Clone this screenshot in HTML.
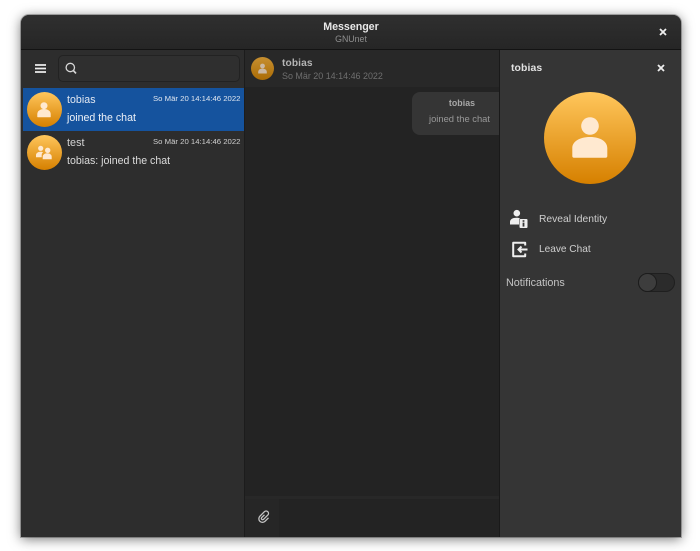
<!DOCTYPE html>
<html><head><meta charset="utf-8"><style>
html,body{margin:0;padding:0;width:700px;height:551px;background:#fff;overflow:hidden}
body{font-family:"Liberation Sans",sans-serif;position:relative}
.a{position:absolute}
.t{position:absolute;white-space:nowrap;line-height:14px}
.win{left:21px;top:15px;width:660px;height:522px;background:#2d2d2d;border-radius:8px 8px 0 0;box-shadow:0 2px 12px rgba(0,0,0,.55),0 0 0 1px rgba(0,0,0,.25)}
.av{position:absolute;border-radius:50%;background:linear-gradient(#ffc65c,#d68000)}
svg{position:absolute;overflow:visible}
</style></head><body>
<div class="a win"></div>
<div class="a" style="left:21px;top:15px;width:660px;height:34px;background:linear-gradient(#2f2f2f,#262626);border-radius:8px 8px 0 0"></div>
<div class="a" style="left:21px;top:49px;width:660px;height:1px;background:#131313"></div>
<div class="t" style="left:21px;width:660px;text-align:center;top:20px;color:#e8e8e8;font-size:10.7px;font-weight:bold;letter-spacing:-.05px">Messenger</div>
<div class="t" style="left:21px;width:660px;text-align:center;top:32px;color:#8f8f8f;font-size:8.8px">GNUnet</div>
<svg style="left:659px;top:28px" width="8" height="8"><path d="M1 1L7 7M7 1L1 7" stroke="#eee" stroke-width="1.8"/></svg>

<!-- sidebar -->
<div class="a" style="left:21px;top:50px;width:223px;height:487px;background:#2d2d2d"></div>
<div class="a" style="left:244px;top:50px;width:1px;height:487px;background:#1c1c1c"></div>
<svg style="left:35px;top:64px" width="11" height="9"><path d="M0 1H11M0 4.5H11M0 8H11" stroke="#ececec" stroke-width="1.8"/></svg>
<div class="a" style="left:58px;top:55px;width:180px;height:25px;background:#2f2f2f;border:1px solid #222;border-radius:5px"></div>
<svg style="left:65px;top:62px" width="12" height="12"><circle cx="5.3" cy="5.5" r="4.2" fill="none" stroke="#d6d6d6" stroke-width="1.3"/><path d="M8.4 8.6L11 11.4" stroke="#d6d6d6" stroke-width="1.7"/></svg>

<div class="a" style="left:23px;top:88px;width:221px;height:43px;background:#15539e"></div>
<div class="av" style="left:27px;top:92px;width:35px;height:35px"></div>
<svg style="left:27px;top:92px" width="35" height="35"><circle cx="17" cy="13.7" r="3.5" fill="#ffe9d0"/><path d="M10.3 24.6V22c0-2.8 2.8-5 6.7-5s6.7 2.2 6.7 5v2.6q0 .7-.7.7H11q-.7 0-.7-.7z" fill="#ffe9d0"/></svg>
<div class="t" style="left:67px;top:93px;color:#e2e8f2;font-size:10.6px;letter-spacing:.05px">tobias</div>
<div class="t" style="left:153px;top:92px;color:#dfe6f0;font-size:7.75px">So Mär 20 14:14:46 2022</div>
<div class="t" style="left:67px;top:111px;color:#eef2f8;font-size:10.6px">joined the chat</div>

<div class="av" style="left:27px;top:135px;width:35px;height:35px"></div>
<svg style="left:27px;top:135px" width="35" height="35"><circle cx="13.7" cy="13.3" r="2.6" fill="#ffe9d0"/><circle cx="20.7" cy="15.3" r="2.7" fill="#ffe9d0"/><path d="M9 22.3v-2.2c0-2 2-3.4 4.6-3.4 1 0 1.8.2 2.6.6-1 .6-1.5 1.6-1.5 2.7v2.3z" fill="#ffe9d0"/><path d="M15.7 24.3v-2.6c0-2 2.1-3.4 4.5-3.4s4.5 1.4 4.5 3.4v2.6z" fill="#ffe9d0"/></svg>
<div class="t" style="left:67px;top:136px;color:#d4d4d4;font-size:10.8px;letter-spacing:.05px">test</div>
<div class="t" style="left:153px;top:135px;color:#cfcfcf;font-size:7.75px">So Mär 20 14:14:46 2022</div>
<div class="t" style="left:67px;top:154px;color:#dcdcdc;font-size:10.6px">tobias: joined the chat</div>

<!-- content -->
<div class="a" style="left:245px;top:50px;width:255px;height:487px;background:#232323"></div>
<div class="a" style="left:245px;top:50px;width:255px;height:37px;background:#282828"></div>
<div class="av" style="left:251px;top:57px;width:23px;height:23px;background:linear-gradient(#c68f30,#ab6c05)"></div>
<svg style="left:251px;top:57px" width="23" height="23"><circle cx="11.5" cy="9" r="2.4" fill="#cbb9a4"/><path d="M7.2 16.5v-1.6c0-2 1.8-3.3 4.3-3.3s4.3 1.3 4.3 3.3v1.6z" fill="#cbb9a4"/></svg>
<div class="t" style="left:282px;top:57px;color:#b4b4b4;font-size:10.2px;font-weight:bold;letter-spacing:.1px">tobias</div>
<div class="t" style="left:282px;top:69px;color:#6f6f6f;font-size:8.95px">So Mär 20 14:14:46 2022</div>
<div class="a" style="left:412px;top:92px;width:88px;height:43px;background:#353535;border-radius:8px 0 0 8px"></div>
<div class="t" style="left:412px;width:100px;text-align:center;top:96px;color:#a8a8a8;font-size:8.8px;font-weight:bold;letter-spacing:.05px">tobias</div>
<div class="t" style="left:429px;top:112px;color:#999;font-size:9.4px">joined the chat</div>
<div class="a" style="left:245px;top:496px;width:255px;height:3px;background:#282828"></div>
<div class="a" style="left:245px;top:499px;width:34px;height:38px;background:#262626"></div>
<svg style="left:257px;top:510px" width="14" height="14" viewBox="0 0 14 14"><path d="M7.5 4.8L4.6 7.7a1.3 1.3 0 0 0 1.8 1.8L10.8 5.1a2.4 2.4 0 0 0-3.4-3.4L2.9 6.2a3.6 3.6 0 0 0 5.1 5.1L11.5 7.8" fill="none" stroke="#c4c4c4" stroke-width="1.3"/></svg>

<!-- panel -->
<div class="a" style="left:499px;top:50px;width:1px;height:487px;background:#191919"></div>
<div class="a" style="left:500px;top:50px;width:181px;height:487px;background:#353535"></div>
<div class="t" style="left:511px;top:62px;color:#e2e2e2;font-size:10.4px;font-weight:bold;letter-spacing:.1px">tobias</div>
<svg style="left:657px;top:64px" width="8" height="8"><path d="M1 1L7 7M7 1L1 7" stroke="#eee" stroke-width="1.8"/></svg>
<div class="av" style="left:544px;top:92px;width:92px;height:92px"></div>
<svg style="left:544px;top:92px" width="92" height="92"><circle cx="46" cy="34" r="8.8" fill="#ffe9d0"/><path d="M28.3 64V56C28.3 50 35 45 46 45S63.3 50 63.3 56V64q0 1.7-1.7 1.7H30q-1.7 0-1.7-1.7z" fill="#ffe9d0"/></svg>

<svg style="left:509px;top:209px" width="19" height="20"><circle cx="7.8" cy="4.2" r="3.3" fill="#eee"/><path d="M1 15.5v-2.5c0-2.5 2.5-4.2 6.5-4.2 1.4 0 2.5.2 3.5.6-.6.4-1 1-1 1.8v4.3z" fill="#eee"/><rect x="10.5" y="10" width="8" height="9" rx="1" fill="#eee"/><rect x="13.6" y="11.2" width="1.8" height="1.6" fill="#353535"/><rect x="13.6" y="13.6" width="1.8" height="4" fill="#353535"/></svg>
<div class="t" style="left:539px;top:213px;color:#cfcfcf;font-size:10.3px">Reveal Identity</div>
<svg style="left:512px;top:241px" width="16" height="17"><path d="M13.2 4.5V1.7H1.2v13.6h12V12.5" fill="none" stroke="#eee" stroke-width="2" stroke-linejoin="round"/><path d="M15.5 8.5H6.5M9.5 5.5L6.5 8.5L9.5 11.5" fill="none" stroke="#eee" stroke-width="2"/></svg>
<div class="t" style="left:539px;top:243px;color:#cfcfcf;font-size:10.1px">Leave Chat</div>
<div class="t" style="left:506px;top:276px;color:#c4c4c4;font-size:10.8px">Notifications</div>
<div class="a" style="left:638px;top:273px;width:35px;height:17px;background:#2b2b2b;border:1px solid #1f1f1f;border-radius:10px"></div>
<div class="a" style="left:638px;top:273px;width:17px;height:17px;background:#3d3d3d;border:1px solid #1c1c1c;border-radius:50%"></div>
</body></html>
